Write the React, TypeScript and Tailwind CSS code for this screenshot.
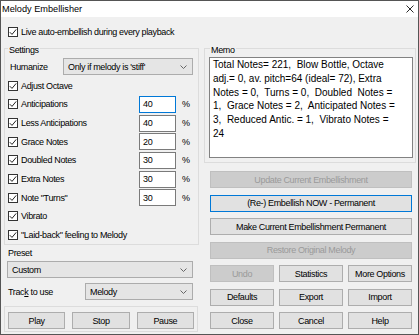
import React from 'react';

const ui = "font-['Liberation_Sans',Arial,sans-serif]";

const CheckBox = () => (
  <div className="w-[10px] h-[10px] border border-[#333] bg-white flex items-center justify-center shrink-0">
    <svg width="8" height="8" viewBox="0 0 8 8">
      <path d="M0.8 4.2 L3 6.4 L7.2 1.4" fill="none" stroke="#222" strokeWidth="1" />
    </svg>
  </div>
);

const Chevron = () => (
  <svg width="7" height="4" viewBox="0 0 7 4" className="shrink-0">
    <path d="M0.5 0.5 L3.5 3.5 L6.5 0.5" fill="none" stroke="#666" strokeWidth="1" />
  </svg>
);

const Dropdown = ({ text, className }: { text: string; className: string }) => (
  <div
    className={`h-[17px] bg-[#e5e5e5] border border-[#acacac] flex items-center justify-between pl-[4px] pr-[5px] ${className}`}
  >
    <span>{text}</span>
    <Chevron />
  </div>
);

const CheckRow = ({ label, value, focused }: { label: string; value?: string; focused?: boolean }) => (
  <div className="h-[18.7px] flex items-center">
    <CheckBox />
    <span className="ml-[3px] w-[118px] whitespace-nowrap">{label}</span>
    {value && (
      <>
        <div
          className={`w-[37px] h-[17px] bg-white border flex items-center pl-[3px] ${
            focused ? 'border-[#0078d7]' : 'border-[#7a7a7a]'
          }`}
        >
          {value}
        </div>
        <span className="ml-[6px]">%</span>
      </>
    )}
  </div>
);

const Btn = ({
  label,
  disabled,
  primary,
  className = '',
}: {
  label: string;
  disabled?: boolean;
  primary?: boolean;
  className?: string;
}) => (
  <div
    className={`h-[17px] flex items-center justify-center border whitespace-nowrap ${
      disabled
        ? 'bg-[#cccccc] border-[#bfbfbf] text-[#9a9a9a]'
        : primary
        ? 'bg-[#e1e1e1] border-[#0078d7]'
        : 'bg-[#e1e1e1] border-[#adadad]'
    } ${className}`}
  >
    {label}
  </div>
);

const settings: { label: string; value?: string; focused?: boolean }[] = [
  { label: 'Adjust Octave' },
  { label: 'Anticipations', value: '40', focused: true },
  { label: 'Less Anticipations', value: '40' },
  { label: 'Grace Notes', value: '20' },
  { label: 'Doubled Notes', value: '30' },
  { label: 'Extra Notes', value: '30' },
  { label: 'Note "Turns"', value: '30' },
  { label: 'Vibrato' },
  { label: '"Laid-back" feeling to Melody' },
];

const memoLines = [
  'Total Notes= 221,  Blow Bottle, Octave',
  'adj.= 0, av. pitch=64 (ideal= 72), Extra',
  'Notes = 0,  Turns = 0,  Doubled  Notes =',
  '1,  Grace Notes = 2,  Anticipated Notes =',
  '3,  Reduced Antic. = 1,  Vibrato Notes =',
  '24',
];

export default function App() {
  return (
    <div
      className={`w-[419px] h-[335px] border border-[#555] bg-[#f0f0f0] flex flex-col text-[9px] leading-[10px] tracking-[-0.35px] text-black ${ui}`}
    >
      {/* Title bar */}
      <div className="h-[16px] bg-white flex items-center justify-between pl-[1px] pr-[4px]">
        <span className="text-[9.2px] tracking-normal">Melody Embellisher</span>
        <svg width="8" height="8" viewBox="0 0 8 8">
          <path d="M0.5 0.5 L7.5 7.5 M7.5 0.5 L0.5 7.5" stroke="#111" strokeWidth="0.9" />
        </svg>
      </div>

      {/* Live checkbox */}
      <div className="mt-[5px] h-[20px] flex items-center pl-[7px]">
        <CheckBox />
        <span className="ml-[3px]">Live auto-embellish during every playback</span>
      </div>

      <div className="flex pl-[3px] gap-[5px]">
        {/* Left column */}
        <div className="w-[195px] flex flex-col">
          <div className="relative mt-[6px] h-[197px] border border-[#dcdcdc] pl-[3px] pt-[8.6px]">
            <span className="absolute top-[-3px] left-[3px] bg-[#f0f0f0] px-[1px] leading-[9px]">Settings</span>
            <div className="h-[18.7px] flex items-center">
              <span className="ml-[2px] w-[53px]">Humanize</span>
              <Dropdown text="Only if melody is 'stiff'" className="w-[130px] h-[16px]" />
            </div>
            {settings.map((s) => (
              <CheckRow key={s.label} {...s} />
            ))}
          </div>

          <div className="mt-[2px] h-[12px] flex items-center pl-[4px]">Preset</div>
          <Dropdown text="Custom" className="mt-[2px] ml-[3px] w-[186px]" />

          <div className="mt-[5px] h-[17px] flex items-center">
            <span className="ml-[4px] w-[77px]">
              Trac<span className="underline">k</span> to use
            </span>
            <Dropdown text="Melody" className="w-[108px]" />
          </div>

          <div className="mt-[6px] w-[194px] border border-[#dcdcdc] pl-[3px] pr-[3px] pt-[5px] pb-[2px] grid grid-cols-3 gap-[7px]">
            <Btn label="Play" />
            <Btn label="Stop" />
            <Btn label="Pause" />
          </div>
        </div>

        {/* Right column */}
        <div className="w-[212px] flex flex-col">
          <div className="relative mt-[6px] h-[115px] border border-[#dcdcdc] pt-[8px] pl-[4px]">
            <span className="absolute top-[-3px] left-[5px] bg-[#f0f0f0] px-[1px] leading-[9px]">Memo</span>
            <div className="w-[204px] h-[101px] bg-white border border-[#828282] pl-[3px] text-[10px] leading-[13.8px] tracking-normal">
              {memoLines.map((l) => (
                <div key={l} className="whitespace-pre">
                  {l}
                </div>
              ))}
            </div>
          </div>

          <div className="mt-[8px] ml-[6px] w-[202px] flex flex-col gap-[6.5px]">
            <Btn label="Update Current Embellishment" disabled />
            <Btn label="(Re-) Embellish NOW - Permanent" primary />
            <Btn label="Make Current Embellishment Permanent" />
            <Btn label="Restore Original Melody" disabled />
            <div className="grid grid-cols-3 gap-[5px]">
              <Btn label="Undo" disabled />
              <Btn label="Statistics" />
              <Btn label="More Options" />
            </div>
            <div className="grid grid-cols-3 gap-[5px]">
              <Btn label="Defaults" />
              <Btn label="Export" />
              <Btn label="Import" />
            </div>
            <div className="grid grid-cols-3 gap-[5px]">
              <Btn label="Close" />
              <Btn label="Cancel" />
              <Btn label="Help" />
            </div>
          </div>
        </div>
      </div>
    </div>
  );
}
